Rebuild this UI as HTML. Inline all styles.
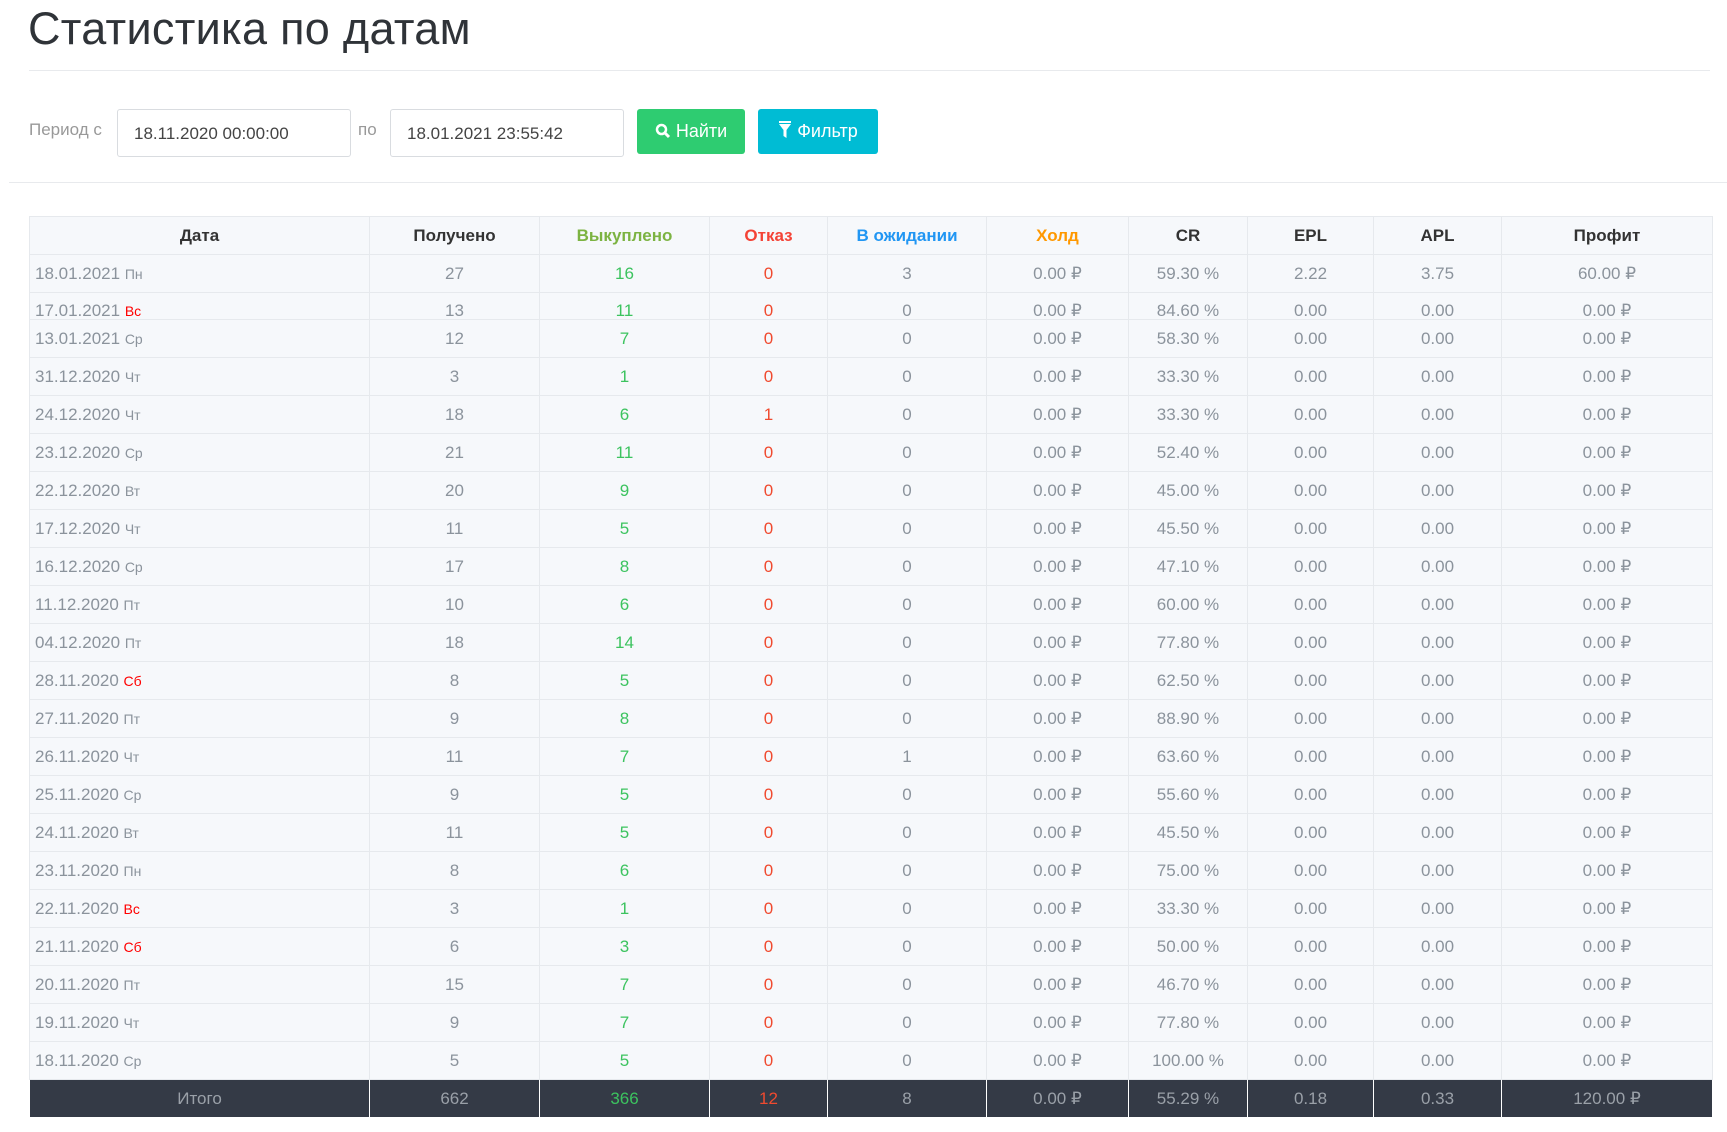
<!DOCTYPE html>
<html><head><meta charset="utf-8"><style>
*{box-sizing:border-box;margin:0;padding:0}
body{width:1727px;height:1132px;background:#fff;font-family:"Liberation Sans",sans-serif;color:#8b939c;position:relative;overflow:hidden}
h1{position:absolute;left:28px;top:3px;font-size:45px;font-weight:normal;color:#2f3338;letter-spacing:0.3px}
.hr1{position:absolute;left:29px;right:17px;top:70px;border-top:1px solid #e8eaed}
.hr2{position:absolute;left:9px;right:0;top:182px;border-top:1px solid #e8eaed}
.lbl{position:absolute;top:120px;font-size:17px;color:#999}
.inp{position:absolute;top:109px;height:48px;width:234px;border:1px solid #d9dce0;border-radius:3px;font-size:17px;color:#444;padding:14px 0 0 16px}
.btn{position:absolute;top:109px;height:45px;border-radius:3px;color:#fff;font-size:18px;padding-top:12px;text-align:center}
table{position:absolute;left:29px;top:216px;width:1683px;border-collapse:collapse;table-layout:fixed;font-size:17px}
td,th{border:1px solid #e6e9ed;text-align:center;height:38px;padding:0;background:#f6f8fb}
th{font-weight:bold;color:#333;background:#f6f8fb}
td.d{text-align:left;padding-left:5px}
td.d small{font-size:14px}
.g{color:#3cc35f}.r{color:#f04a2f}.we{color:#f00}
tr.cut td{height:26px;vertical-align:top;padding-top:9px;line-height:17px;overflow:hidden}
tr.cut td div{height:17px;overflow:hidden}
tfoot td{background:#343a46;color:#9aa0a8;border-color:#fff;height:38px}
</style></head><body>
<h1>Статистика по датам</h1>
<div class="hr1"></div>
<div class="lbl" style="left:29px">Период с</div>
<div class="inp" style="left:117px">18.11.2020 00:00:00</div>
<div class="lbl" style="left:358px">по</div>
<div class="inp" style="left:390px">18.01.2021 23:55:42</div>
<div class="btn" style="left:637px;width:108px;background:#2ecc71">
<svg width="16" height="16" viewBox="0 0 16 16" style="vertical-align:-2px"><circle cx="6.5" cy="6.5" r="4.5" fill="none" stroke="#fff" stroke-width="2.5"/><path d="M10 10l4 4" stroke="#fff" stroke-width="3"/></svg> Найти</div>
<div class="btn" style="left:758px;width:120px;background:#00bcd4">
<svg width="14" height="18" viewBox="0 0 14 18" style="vertical-align:-2px"><rect x="1" y="0" width="12" height="2" fill="#fff"/><path d="M1 3h12l-4.5 6v8l-3-2v-6z" fill="#fff"/></svg> Фильтр</div>
<div class="hr2"></div>
<table>
<colgroup><col style="width:340px"><col style="width:170px"><col style="width:170px"><col style="width:118px"><col style="width:159px"><col style="width:142px"><col style="width:119px"><col style="width:126px"><col style="width:128px"><col style="width:211px"></colgroup>
<thead><tr><th>Дата</th><th>Получено</th><th style="color:#7cb342">Выкуплено</th><th style="color:#f44336">Отказ</th><th style="color:#2196f3">В ожидании</th><th style="color:#ff9800">Холд</th><th>CR</th><th>EPL</th><th>APL</th><th>Профит</th></tr></thead>
<tbody>
<tr><td class="d">18.01.2021 <small>Пн</small></td><td>27</td><td class="g">16</td><td class="r">0</td><td>3</td><td>0.00 ₽</td><td>59.30 %</td><td>2.22</td><td>3.75</td><td>60.00 ₽</td></tr>
<tr class="cut"><td class="d"><div>17.01.2021 <small class="we">Вс</small></div></td><td><div>13</div></td><td class="g"><div>11</div></td><td class="r"><div>0</div></td><td><div>0</div></td><td><div>0.00 ₽</div></td><td><div>84.60 %</div></td><td><div>0.00</div></td><td><div>0.00</div></td><td><div>0.00 ₽</div></td></tr>
<tr><td class="d">13.01.2021 <small>Ср</small></td><td>12</td><td class="g">7</td><td class="r">0</td><td>0</td><td>0.00 ₽</td><td>58.30 %</td><td>0.00</td><td>0.00</td><td>0.00 ₽</td></tr>
<tr><td class="d">31.12.2020 <small>Чт</small></td><td>3</td><td class="g">1</td><td class="r">0</td><td>0</td><td>0.00 ₽</td><td>33.30 %</td><td>0.00</td><td>0.00</td><td>0.00 ₽</td></tr>
<tr><td class="d">24.12.2020 <small>Чт</small></td><td>18</td><td class="g">6</td><td class="r">1</td><td>0</td><td>0.00 ₽</td><td>33.30 %</td><td>0.00</td><td>0.00</td><td>0.00 ₽</td></tr>
<tr><td class="d">23.12.2020 <small>Ср</small></td><td>21</td><td class="g">11</td><td class="r">0</td><td>0</td><td>0.00 ₽</td><td>52.40 %</td><td>0.00</td><td>0.00</td><td>0.00 ₽</td></tr>
<tr><td class="d">22.12.2020 <small>Вт</small></td><td>20</td><td class="g">9</td><td class="r">0</td><td>0</td><td>0.00 ₽</td><td>45.00 %</td><td>0.00</td><td>0.00</td><td>0.00 ₽</td></tr>
<tr><td class="d">17.12.2020 <small>Чт</small></td><td>11</td><td class="g">5</td><td class="r">0</td><td>0</td><td>0.00 ₽</td><td>45.50 %</td><td>0.00</td><td>0.00</td><td>0.00 ₽</td></tr>
<tr><td class="d">16.12.2020 <small>Ср</small></td><td>17</td><td class="g">8</td><td class="r">0</td><td>0</td><td>0.00 ₽</td><td>47.10 %</td><td>0.00</td><td>0.00</td><td>0.00 ₽</td></tr>
<tr><td class="d">11.12.2020 <small>Пт</small></td><td>10</td><td class="g">6</td><td class="r">0</td><td>0</td><td>0.00 ₽</td><td>60.00 %</td><td>0.00</td><td>0.00</td><td>0.00 ₽</td></tr>
<tr><td class="d">04.12.2020 <small>Пт</small></td><td>18</td><td class="g">14</td><td class="r">0</td><td>0</td><td>0.00 ₽</td><td>77.80 %</td><td>0.00</td><td>0.00</td><td>0.00 ₽</td></tr>
<tr><td class="d">28.11.2020 <small class="we">Сб</small></td><td>8</td><td class="g">5</td><td class="r">0</td><td>0</td><td>0.00 ₽</td><td>62.50 %</td><td>0.00</td><td>0.00</td><td>0.00 ₽</td></tr>
<tr><td class="d">27.11.2020 <small>Пт</small></td><td>9</td><td class="g">8</td><td class="r">0</td><td>0</td><td>0.00 ₽</td><td>88.90 %</td><td>0.00</td><td>0.00</td><td>0.00 ₽</td></tr>
<tr><td class="d">26.11.2020 <small>Чт</small></td><td>11</td><td class="g">7</td><td class="r">0</td><td>1</td><td>0.00 ₽</td><td>63.60 %</td><td>0.00</td><td>0.00</td><td>0.00 ₽</td></tr>
<tr><td class="d">25.11.2020 <small>Ср</small></td><td>9</td><td class="g">5</td><td class="r">0</td><td>0</td><td>0.00 ₽</td><td>55.60 %</td><td>0.00</td><td>0.00</td><td>0.00 ₽</td></tr>
<tr><td class="d">24.11.2020 <small>Вт</small></td><td>11</td><td class="g">5</td><td class="r">0</td><td>0</td><td>0.00 ₽</td><td>45.50 %</td><td>0.00</td><td>0.00</td><td>0.00 ₽</td></tr>
<tr><td class="d">23.11.2020 <small>Пн</small></td><td>8</td><td class="g">6</td><td class="r">0</td><td>0</td><td>0.00 ₽</td><td>75.00 %</td><td>0.00</td><td>0.00</td><td>0.00 ₽</td></tr>
<tr><td class="d">22.11.2020 <small class="we">Вс</small></td><td>3</td><td class="g">1</td><td class="r">0</td><td>0</td><td>0.00 ₽</td><td>33.30 %</td><td>0.00</td><td>0.00</td><td>0.00 ₽</td></tr>
<tr><td class="d">21.11.2020 <small class="we">Сб</small></td><td>6</td><td class="g">3</td><td class="r">0</td><td>0</td><td>0.00 ₽</td><td>50.00 %</td><td>0.00</td><td>0.00</td><td>0.00 ₽</td></tr>
<tr><td class="d">20.11.2020 <small>Пт</small></td><td>15</td><td class="g">7</td><td class="r">0</td><td>0</td><td>0.00 ₽</td><td>46.70 %</td><td>0.00</td><td>0.00</td><td>0.00 ₽</td></tr>
<tr><td class="d">19.11.2020 <small>Чт</small></td><td>9</td><td class="g">7</td><td class="r">0</td><td>0</td><td>0.00 ₽</td><td>77.80 %</td><td>0.00</td><td>0.00</td><td>0.00 ₽</td></tr>
<tr><td class="d">18.11.2020 <small>Ср</small></td><td>5</td><td class="g">5</td><td class="r">0</td><td>0</td><td>0.00 ₽</td><td>100.00 %</td><td>0.00</td><td>0.00</td><td>0.00 ₽</td></tr>
</tbody>
<tfoot><tr><td>Итого</td><td>662</td><td class="g">366</td><td class="r">12</td><td>8</td><td>0.00 ₽</td><td>55.29 %</td><td>0.18</td><td>0.33</td><td>120.00 ₽</td></tr></tfoot>
</table>
</body></html>
